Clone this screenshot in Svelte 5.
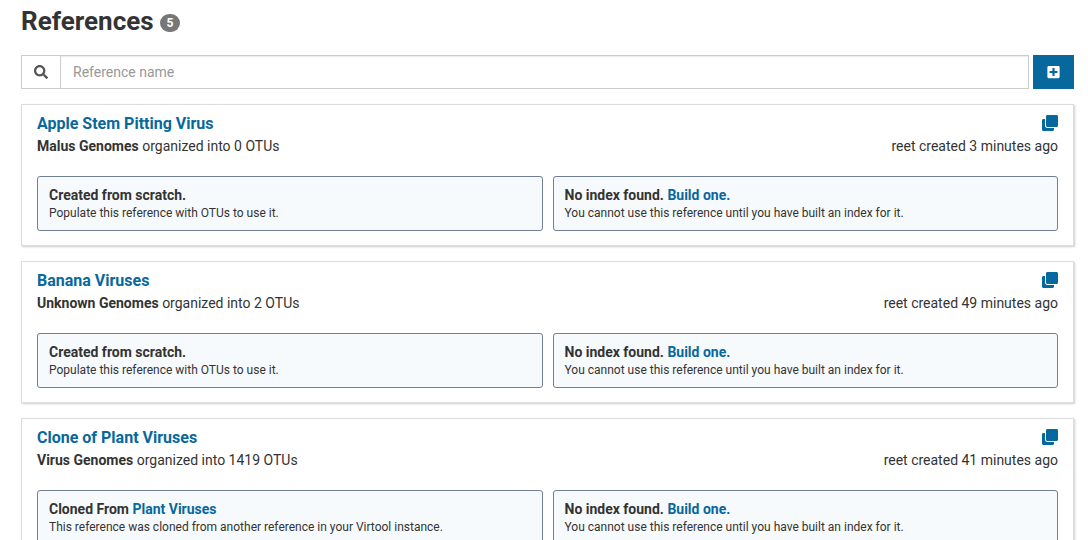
<script>
  const unbuilt = {
    title: 'No index found.',
    link: 'Build one.',
    text: 'You cannot use this reference until you have built an index for it.'
  };
  const scratch = {
    title: 'Created from scratch.',
    link: '',
    text: 'Populate this reference with OTUs to use it.'
  };

  const references = [
    { name: 'Apple Stem Pitting Virus', organism: 'Malus', otus: 0, created: '3 minutes ago', panels: [scratch, unbuilt] },
    { name: 'Banana Viruses', organism: 'Unknown', otus: 2, created: '49 minutes ago', panels: [scratch, unbuilt] },
    {
      name: 'Clone of Plant Viruses',
      organism: 'Virus',
      otus: 1419,
      created: '41 minutes ago',
      panels: [
        {
          title: 'Cloned From',
          link: 'Plant Viruses',
          text: 'This reference was cloned from another reference in your Virtool instance.'
        },
        unbuilt
      ]
    }
  ];

  let term = $state('');
</script>

<main class="page">
  <h1 class="heading">References <span class="badge">5</span></h1>

  <div class="toolbar">
    <div class="search">
      <label class="addon" for="reference-search" aria-label="Reference name">
        <svg width="14" height="14" viewBox="0 0 512 512" aria-hidden="true">
          <path fill="currentColor" d="M505 442.7L405.3 343c-4.500-4.500-10.600-7-17-7H372c27.600-35.300 44-79.700 44-128C416 93.100 322.900 0 208 0S0 93.100 0 208s93.100 208 208 208c48.300 0 92.700-16.400 128-44v16.300c0 6.400 2.500 12.500 7 17l99.700 99.700c9.400 9.400 24.600 9.400 33.900 0l28.300-28.300c9.400-9.400 9.400-24.600.1-34zM208 336c-70.700 0-128-57.200-128-128 0-70.700 57.200-128 128-128 70.700 0 128 57.200 128 128 0 70.700-57.200 128-128 128z" />
        </svg>
      </label>
      <input id="reference-search" type="text" placeholder="Reference name" bind:value={term} />
    </div>
    <button class="create" type="button" aria-label="Create">
      <svg width="13" height="14" viewBox="0 0 448 512" aria-hidden="true">
        <path fill="currentColor" d="M400 32H48C21.500 32 0 53.500 0 80v352c0 26.500 21.500 48 48 48h352c26.500 0 48-21.500 48-48V80c0-26.500-21.500-48-48-48zm-32 252c0 6.600-5.400 12-12 12h-92v92c0 6.600-5.400 12-12 12h-56c-6.600 0-12-5.400-12-12v-92H92c-6.600 0-12-5.400-12-12v-56c0-6.600 5.400-12 12-12h92v-92c0-6.600 5.400-12 12-12h56c6.600 0 12 5.400 12 12v92h92c6.600 0 12 5.400 12 12v56z" />
      </svg>
    </button>
  </div>

  <div class="list">
    {#each references as reference}
      <article class="card">
        <header class="row title-row">
          <a class="name" href="#reference">{reference.name}</a>
          <button class="clone" type="button" aria-label="Clone">
            <svg width="16" height="16" viewBox="0 0 512 512" aria-hidden="true">
              <path fill="currentColor" d="M464 0c26.510 0 48 21.490 48 48v288c0 26.510-21.490 48-48 48H176c-26.510 0-48-21.490-48-48V48c0-26.510 21.490-48 48-48h288M176 416c-44.112 0-80-35.888-80-80V128H48c-26.510 0-48 21.490-48 48v288c0 26.510 21.490 48 48 48h288c26.510 0 48-21.490 48-48v-48H176z" />
            </svg>
          </button>
        </header>
        <div class="row meta">
          <span><strong>{reference.organism} Genomes</strong> organized into {reference.otus} OTUs</span>
          <span>reet created {reference.created}</span>
        </div>
        <div class="panels">
          {#each reference.panels as panel}
            <section class="panel">
              <div class="panel-title">
                {panel.title}
                {#if panel.link}<a href="#link">{panel.link}</a>{/if}
              </div>
              <div class="panel-text">{panel.text}</div>
            </section>
          {/each}
        </div>
      </article>
    {/each}
  </div>
</main>

<style>
  :global(body) {
    margin: 0;
    background: #fff;
  }

  .page {
    padding: 4px 14px 15px 21px;
    color: #333;
    font-family: Roboto, sans-serif;
    font-size: 14px;
    line-height: 20px;
  }

  .heading {
    display: flex;
    align-items: center;
    gap: 6px;
    margin: 0 0 17px;
    font-size: 26px;
    font-weight: 700;
    line-height: 34px;
  }

  .badge {
    padding: 3px 7px;
    border-radius: 10px;
    background: #777;
    color: #fff;
    font-size: 12px;
    line-height: 12px;
    margin-top: 4px;
  }

  .toolbar {
    display: flex;
    gap: 4px;
    margin-bottom: 15px;
  }

  .search {
    display: flex;
    flex: 1;
    border: 1px solid #ccc;
  }

  .addon {
    display: flex;
    align-items: center;
    padding: 0 12px;
    border-right: 1px solid #ccc;
    color: #555;
  }

  input {
    flex: 1;
    min-width: 0;
    padding: 6px 12px;
    border: 0;
    outline: 0;
    background: #fff;
    box-shadow: inset 0 1px 1px rgba(0, 0, 0, 0.075);
    color: #555;
    font: inherit;
  }

  input::placeholder {
    color: #999;
    opacity: 1;
  }

  button {
    display: flex;
    align-items: center;
    border: 0;
    cursor: pointer;
  }

  .create {
    padding: 0 14px;
    background: #07689d;
    color: #fff;
  }

  .list {
    display: grid;
    gap: 15px;
  }

  .card {
    padding: 7px 15px 14px;
    border: 1px solid #ddd;
    box-shadow: 1px 1px 2px rgba(0, 0, 0, 0.2);
  }

  .row {
    display: flex;
    justify-content: space-between;
  }

  .title-row {
    align-items: center;
    line-height: 24px;
  }

  a {
    color: #07689d;
    text-decoration: none;
  }

  .name {
    font-size: 16px;
    font-weight: 700;
  }

  .clone {
    padding: 0 0 2px;
    background: none;
    color: #07689d;
  }

  .meta {
    margin-bottom: 20px;
  }

  .panels {
    display: grid;
    grid-template-columns: 1fr 1fr;
    gap: 10px;
  }

  .panel {
    padding: 9px 11px;
    border: 1px solid #718096;
    border-radius: 3px;
    background: #f7fafc;
  }

  .panel-title {
    font-weight: 700;
    line-height: 19px;
  }

  .panel-text {
    font-size: 12px;
    line-height: 16px;
  }
</style>
